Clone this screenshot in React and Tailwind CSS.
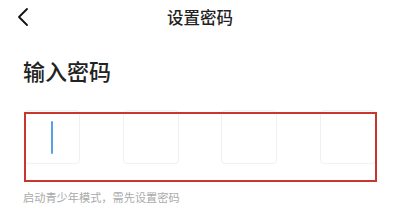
import React from 'react';

const font = { fontFamily: '"Noto Sans CJK SC", "Noto Sans", sans-serif' };

const CodeBox = ({ active }) => (
  <div className="w-[56px] h-[54px] rounded-[4px] border border-[#f1f1f1] bg-white flex items-center justify-center">
    {active && <div className="w-[2px] h-[33px] bg-[#5a9ee8] rounded-full" />}
  </div>
);

export default function App() {
  return (
    <div className="w-[400px] h-[217px] bg-white overflow-hidden text-[#222]" style={font}>
      <div className="h-[34px] flex items-center px-[16px]">
        <div className="w-[20px] flex items-center">
          <svg width="14" height="20" viewBox="0 0 14 20" fill="none">
            <path d="M11 2 L3 10 L11 18" stroke="#111" strokeWidth="1.8" strokeLinecap="round" strokeLinejoin="round" />
          </svg>
        </div>
        <div className="flex-1 text-center text-[16.5px] font-medium leading-none -ml-[20px]">设置密码</div>
      </div>

      <div className="px-[23px] pt-[23px] text-[22px] font-medium leading-[26px]">输入密码</div>

      <div className="relative mx-[24px] mt-[27px]">
        <div className="flex justify-between">
          <CodeBox active />
          <CodeBox />
          <CodeBox />
          <CodeBox />
        </div>
        <div className="absolute left-0 top-[2px] w-[353px] h-[70px] border-2 border-[#c8372d] pointer-events-none" />
      </div>

      <div className="px-[23px] mt-[28px] text-[11.2px] leading-none text-[#aaa]">启动青少年模式，需先设置密码</div>
    </div>
  );
}
